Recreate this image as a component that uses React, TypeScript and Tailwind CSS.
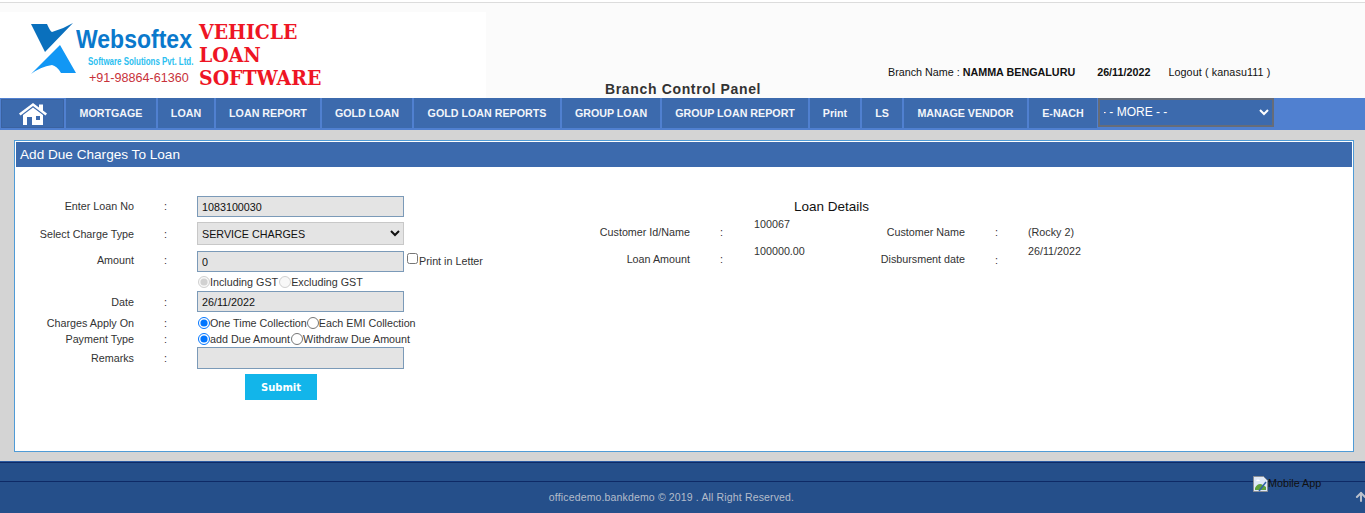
import { ArrowUp } from "lucide-react";

const menuItems = [
  { label: "MORTGAGE", width: "w-[90px]" },
  { label: "LOAN", width: "w-[56px]" },
  { label: "LOAN REPORT", width: "w-[104px]" },
  { label: "GOLD LOAN", width: "w-[90px]" },
  { label: "GOLD LOAN REPORTS", width: "w-[146px]" },
  { label: "GROUP LOAN", width: "w-[98px]" },
  { label: "GROUP LOAN REPORT", width: "w-[146px]" },
  { label: "Print", width: "w-[50px]" },
  { label: "LS", width: "w-[40px]" },
  { label: "MANAGE VENDOR", width: "w-[123px]" },
  { label: "E-NACH", width: "w-[68px]" },
];

const fieldClass = "w-[207px] h-[21px] bg-[#e4e4e4] border border-[#7b9ab8] px-[4px] text-[10.750px] text-[#111]";

const Label = ({ text, className = "" }: { text: string; className?: string }) => (
  <div className={`flex items-center ${className}`}>
    <div className="w-[118px] text-right whitespace-nowrap">{text}</div>
    <div className="w-[63px] pl-[30px]">:</div>
  </div>
);

const HomeIcon = () => (
  <svg width="30" height="24" viewBox="0 0 30 24">
    <path d="M1 11.500 15 1l6 4.500V2.500h4V8.500l4 3-1.500 2L15 4 2.500 13.500z" fill="#fff" />
    <path d="M5 13 15 5.500 25 13v10H14v-8H9v8H5z" fill="#fff" />
    <rect x="18" y="14" width="4" height="4" fill="#3c6aad" />
  </svg>
);

const BrokenImage = () => (
  <svg width="15" height="16" viewBox="0 0 15 16" className="shrink-0">
    <path d="M.5.5h10l4 4v11H.5z" fill="#dfe9f7" stroke="#8a8f96" />
    <path d="M2 12c2-4 5-5 8-3l3 2v3H2z" fill="#5fa13c" />
    <path d="M3 5c1-2 3-2 4 0z" fill="#fff" />
    <path d="M13 6 6 15" stroke="#2f5fa8" strokeWidth="1.500" />
  </svg>
);

const Logo = () => (
  <div className="w-[486px] h-[86px] bg-white flex shrink-0 overflow-hidden">
    <svg width="46" height="52" viewBox="0 0 46 52" className="ml-[30px] mt-[11px] shrink-0">
      <path d="M1 1H17Q20 8 22 9 33 6 43 0L15 29z" fill="#0a70bd" />
      <path d="M30 22 46 50H31Q27 43 22 42 10 44 1 51z" fill="#1197f5" />
    </svg>
    <div className="w-[125px] mt-[12px] shrink-0">
      <div className="text-[26px] leading-[30px] font-bold text-[#0a79cc] scale-x-[0.885] origin-left whitespace-nowrap">Websoftex</div>
      <div className="text-[11.500px] leading-[13px] mt-[1px] ml-[12px] font-bold text-[#2cc0f0] scale-x-[0.69] origin-left whitespace-nowrap">Software Solutions Pvt. Ltd.</div>
      <div className="text-[12.600px] leading-[16px] mt-[2px] ml-[13px] text-[#c8323a] whitespace-nowrap">+91-98864-61360</div>
    </div>
    <div className="-ml-[2px] mt-[8px] text-[21px] leading-[23px] font-bold text-[#ee1524] font-['DejaVu_Serif',serif] scale-x-[0.9] origin-left">
      <div>VEHICLE</div>
      <div>LOAN</div>
      <div>SOFTWARE</div>
    </div>
  </div>
);

export default function App() {
  return (
    <div className="w-[1365px] h-[513px] overflow-hidden relative flex flex-col bg-[#d4d4d4] font-['Liberation_Sans',sans-serif] text-[#333]">
      {/* header */}
      <div className="h-[98px] bg-[#fbfbfb] flex flex-col shrink-0">
        <div className="h-[2px] bg-white" />
        <div className="h-px bg-[#dcdcdc]" />
        <div className="flex pt-[9px]">
          <Logo />
          <div className="flex flex-col">
            <div className="flex pl-[402px] pt-[54px] text-[10.750px] leading-[13px] text-[#111] whitespace-nowrap">
              <span>Branch Name : <b>NAMMA BENGALURU</b></span>
              <b className="ml-[22px]">26/11/2022</b>
              <span className="ml-[18px] tracking-[0.1px]">Logout ( kanasu111 )</span>
            </div>
            <div className="pl-[119px] pt-[2px] text-[14px] leading-[16px] font-bold tracking-[0.65px] text-[#333] whitespace-nowrap">Branch Control Panel</div>
          </div>
        </div>
      </div>

      {/* menu */}
      <div className="h-[32px] bg-[#5080d0] flex items-start shrink-0 gap-[2px]">
        <div className="w-[63px] h-[29px] ml-[1px] mt-[1px] bg-[#3c6aad] border border-[#3a62a0] flex items-center justify-center">
          <HomeIcon />
        </div>
        {menuItems.map((item) => (
          <div key={item.label} className={`${item.width} h-[30px] bg-[#3c6aad] flex items-center justify-center text-[10.700px] font-bold text-[#f2f5fa] whitespace-nowrap`}>
            {item.label}
          </div>
        ))}
        <select className="w-[176px] h-[29px] -ml-[1px] bg-[#3c6aad] border-2 border-[#666c78] text-[12px] text-white pb-[2px] -indent-[2px]">
          <option>- - MORE - -</option>
        </select>
      </div>

      {/* panel */}
      <div className="flex-1 pl-[14px] pr-[11px] pt-[10px] pb-[9px]">
        <div className="h-full border border-[#4f9bd6] bg-white p-px flex flex-col">
          <div className="h-[25px] bg-[#3c6aad] text-white text-[13.600px] leading-[26px] pl-[4px] shrink-0">Add Due Charges To Loan</div>
          <div className="flex flex-1 text-[10.750px] text-[#333]">
            {/* form */}
            <div className="w-[555px] pt-[29px] shrink-0">
              <div className="flex h-[21px]">
                <Label text="Enter Loan No" />
                <input readOnly value="1083100030" className={fieldClass} />
              </div>
              <div className="flex h-[23px] mt-[5px]">
                <Label text="Select Charge Type" className="pt-[2px]" />
                <select className="w-[207px] h-[23px] bg-[#e4e4e4] border border-[#c8c8c8] text-[10.750px] text-[#111]">
                  <option>SERVICE CHARGES</option>
                </select>
              </div>
              <div className="flex h-[21px] mt-[6px]">
                <Label text="Amount" className="pb-[2px]" />
                <input readOnly value="0" className={fieldClass} />
                <label className="flex items-start ml-[3px] whitespace-nowrap">
                  <input type="checkbox" className="m-0 mt-[2px] w-[11px] h-[11px]" />
                  <span className="mt-[2px] ml-px">Print in Letter</span>
                </label>
              </div>
              <div className="flex h-[19px] items-center pl-[182px] pt-[1px] whitespace-nowrap">
                <input type="radio" disabled defaultChecked name="gst" className="m-0 w-[12px] h-[12px]" />
                <span>Including GST</span>
                <input type="radio" disabled name="gst" className="m-0 ml-px w-[12px] h-[12px]" />
                <span>Excluding GST</span>
              </div>
              <div className="flex h-[21px]">
                <Label text="Date" className="pt-[2px]" />
                <input readOnly value="26/11/2022" className={fieldClass} />
              </div>
              <div className="flex h-[16px] mt-[3px] items-center whitespace-nowrap">
                <Label text="Charges Apply On" />
                <input type="radio" defaultChecked name="apply" className="m-0 ml-px w-[12px] h-[12px]" />
                <span>One Time Collection</span>
                <input type="radio" name="apply" className="m-0 w-[12px] h-[12px]" />
                <span>Each EMI Collection</span>
              </div>
              <div className="flex h-[16px] items-center whitespace-nowrap">
                <Label text="Payment Type" />
                <input type="radio" defaultChecked name="pay" className="m-0 ml-px w-[12px] h-[12px]" />
                <span>add Due Amount</span>
                <input type="radio" name="pay" className="m-0 ml-px w-[12px] h-[12px]" />
                <span>Withdraw Due Amount</span>
              </div>
              <div className="flex h-[22px]">
                <Label text="Remarks" />
                <input readOnly className={`${fieldClass} h-[22px]`} />
              </div>
              <button className="block w-[72px] h-[26px] ml-[229px] mt-[5px] bg-[#12b5ea] text-white text-[10px] font-bold font-['DejaVu_Sans',sans-serif]">Submit</button>
            </div>

            {/* loan details */}
            <div className="flex-1 pt-[31px]">
              <div className="pl-[223px] text-[13.500px] leading-[18px] text-[#111]">Loan Details</div>
              <div className="grid grid-cols-[119px_64px_132px_79px_63px_auto] mt-[1px] leading-[14px]">
                <div className="text-right mt-[8px]">Customer Id/Name</div>
                <div className="pl-[30px] mt-[8px]">:</div>
                <div>100067</div>
                <div className="justify-self-end mt-[8px] whitespace-nowrap">Customer Name</div>
                <div className="pl-[30px] mt-[8px]">:</div>
                <div className="mt-[8px]">(Rocky 2)</div>
                <div className="text-right mt-[13px]">Loan Amount</div>
                <div className="pl-[30px] mt-[13px]">:</div>
                <div className="mt-[5px]">100000.00</div>
                <div className="justify-self-end mt-[13px] whitespace-nowrap">Disbursment date</div>
                <div className="pl-[30px] mt-[14px]">:</div>
                <div className="mt-[5px]">26/11/2022</div>
              </div>
            </div>
          </div>
        </div>
      </div>

      {/* footer */}
      <div className="h-[52px] bg-[#254f8a] border-t border-[#2a5aa0] shrink-0">
        <div className="h-[18px] border-t border-b border-[#0e2a66] box-content" />
        <div className="text-center text-[10.500px] leading-[30px] tracking-[0.15px] text-[#b4bdca] pr-[22px]">officedemo.bankdemo © 2019 . All Right Reserved.</div>
      </div>

      {/* floating bits over the footer */}
      <div className="absolute left-[1253px] top-[476px] flex items-start text-[10.750px] leading-[14px] text-[#111]">
        <BrokenImage />
        <span>Mobile App</span>
      </div>
      <ArrowUp size={14} strokeWidth={3.500} className="absolute left-[1354px] top-[490px] text-[#b9c0cc]" />
    </div>
  );
}
